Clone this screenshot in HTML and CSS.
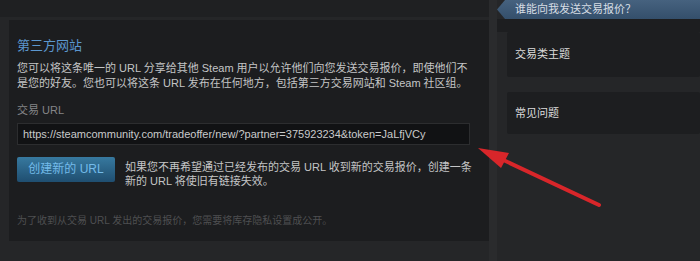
FILE: index.html
```html
<!DOCTYPE html>
<html lang="zh-CN">
<head>
<meta charset="utf-8">
<title>交易 URL</title>
<link rel="stylesheet" href="styles.css">
</head>
<body>
<div class="page">
  <div class="main">
    <div class="topbar"></div>
    <div class="panel">
      <h2 class="title">第三方网站</h2>
      <p class="desc">您可以将这条唯一的 URL 分享给其他 Steam 用户以允许他们向您发送交易报价，即使他们不<br>是您的好友。您也可以将这条 URL 发布在任何地方，包括第三方交易网站和 Steam 社区组。</p>
      <div class="label">交易 URL</div>
      <div class="urlbox">https://steamcommunity.com/tradeoffer/new/?partner=375923234&amp;token=JaLfjVCy</div>
      <div class="actions">
        <div class="btn">创建新的 URL</div>
        <p class="note">如果您不再希望通过已经发布的交易 URL 收到新的交易报价，创建一条<br>新的 URL 将使旧有链接失效。</p>
      </div>
      <p class="foot">为了收到从交易 URL 发出的交易报价，您需要将库存隐私设置成公开。</p>
    </div>
  </div>
  <div class="gutter"></div>
  <div class="side">
    <div class="tab">谁能向我发送交易报价？</div>
    <div class="sidegap"></div>
    <div class="sbox">交易类主题</div>
    <div class="sbox second">常见问题</div>
  </div>
  <svg class="arrow" width="700" height="261" viewBox="0 0 700 261">
    <line x1="599" y1="205" x2="497" y2="157" stroke="#d8262a" stroke-width="4" stroke-linecap="round"/>
    <polygon points="478,148 509,153 501,168" fill="#d8262a"/>
  </svg>
</div>
</body>
</html>
```

FILE: styles.css
```css
html, body {
  margin: 0;
  padding: 0;
  background: #252628;
}
body {
  font-family: "Liberation Sans", "Noto Sans CJK SC", sans-serif;
  color: #c6c7c8;
}
.page {
  position: relative;
  width: 700px;
  height: 261px;
  display: flex;
  overflow: hidden;
}
.main {
  width: 489px;
  flex: none;
}
.topbar {
  height: 17px;
  background: #1f2022;
}
.panel {
  margin: 3px 0 0 9px;
  height: 221px;
  box-sizing: border-box;
  background: #1c1d1f;
  padding: 18px 19px 0 8px;
}
.title {
  margin: 0;
  font-size: 13px;
  line-height: 16px;
  font-weight: normal;
  color: #5b97cf;
}
.desc {
  margin: 7px 0 0;
  font-size: 11px;
  line-height: 15px;
  color: #c4c5c6;
  white-space: nowrap;
}
.label {
  margin-top: 12px;
  font-size: 11px;
  line-height: 14px;
  color: #848587;
}
.urlbox {
  margin-top: 6px;
  height: 22px;
  box-sizing: border-box;
  border: 1px solid #2c2d2f;
  background: #111214;
  padding: 0 5px;
  font-size: 11px;
  line-height: 20px;
  color: #c9cacb;
  white-space: nowrap;
}
.actions {
  display: flex;
  gap: 10px;
  margin-top: 12px;
}
.btn {
  flex: none;
  width: 98px;
  height: 25px;
  box-sizing: border-box;
  border-radius: 2px;
  background: linear-gradient(to bottom, #37799f, #1f4e70);
  color: #74bbea;
  font-size: 12px;
  line-height: 25px;
  text-align: center;
}
.note {
  margin: 3px 0 0;
  font-size: 11px;
  line-height: 14px;
  color: #c4c5c6;
  white-space: nowrap;
}
.foot {
  margin: 26px 0 0;
  font-size: 10px;
  line-height: 14px;
  color: #4e4f51;
  white-space: nowrap;
}
.gutter {
  width: 8px;
  flex: none;
  background: #2a2b2d;
}
.side {
  flex: 1;
  display: flex;
  flex-direction: column;
}
.tab {
  height: 19px;
  padding-left: 18px;
  background: linear-gradient(to bottom, #46627f, #344f6b);
  clip-path: polygon(0 50%, 8px 0, 100% 0, 100% 100%, 8px 100%);
  color: #d6dde4;
  font-size: 11px;
  line-height: 19px;
}
.sidegap {
  height: 13px;
  background: #1d1e20;
}
.sbox {
  margin-left: 10px;
  height: 45px;
  padding-left: 8px;
  background: #1d1e20;
  color: #dcdcdc;
  font-size: 11px;
  line-height: 45px;
  border-radius: 2px;
}
.sbox.second {
  margin-top: 15px;
  height: 42px;
  line-height: 42px;
}
.arrow {
  position: absolute;
  left: 0;
  top: 0;
  pointer-events: none;
}
```
